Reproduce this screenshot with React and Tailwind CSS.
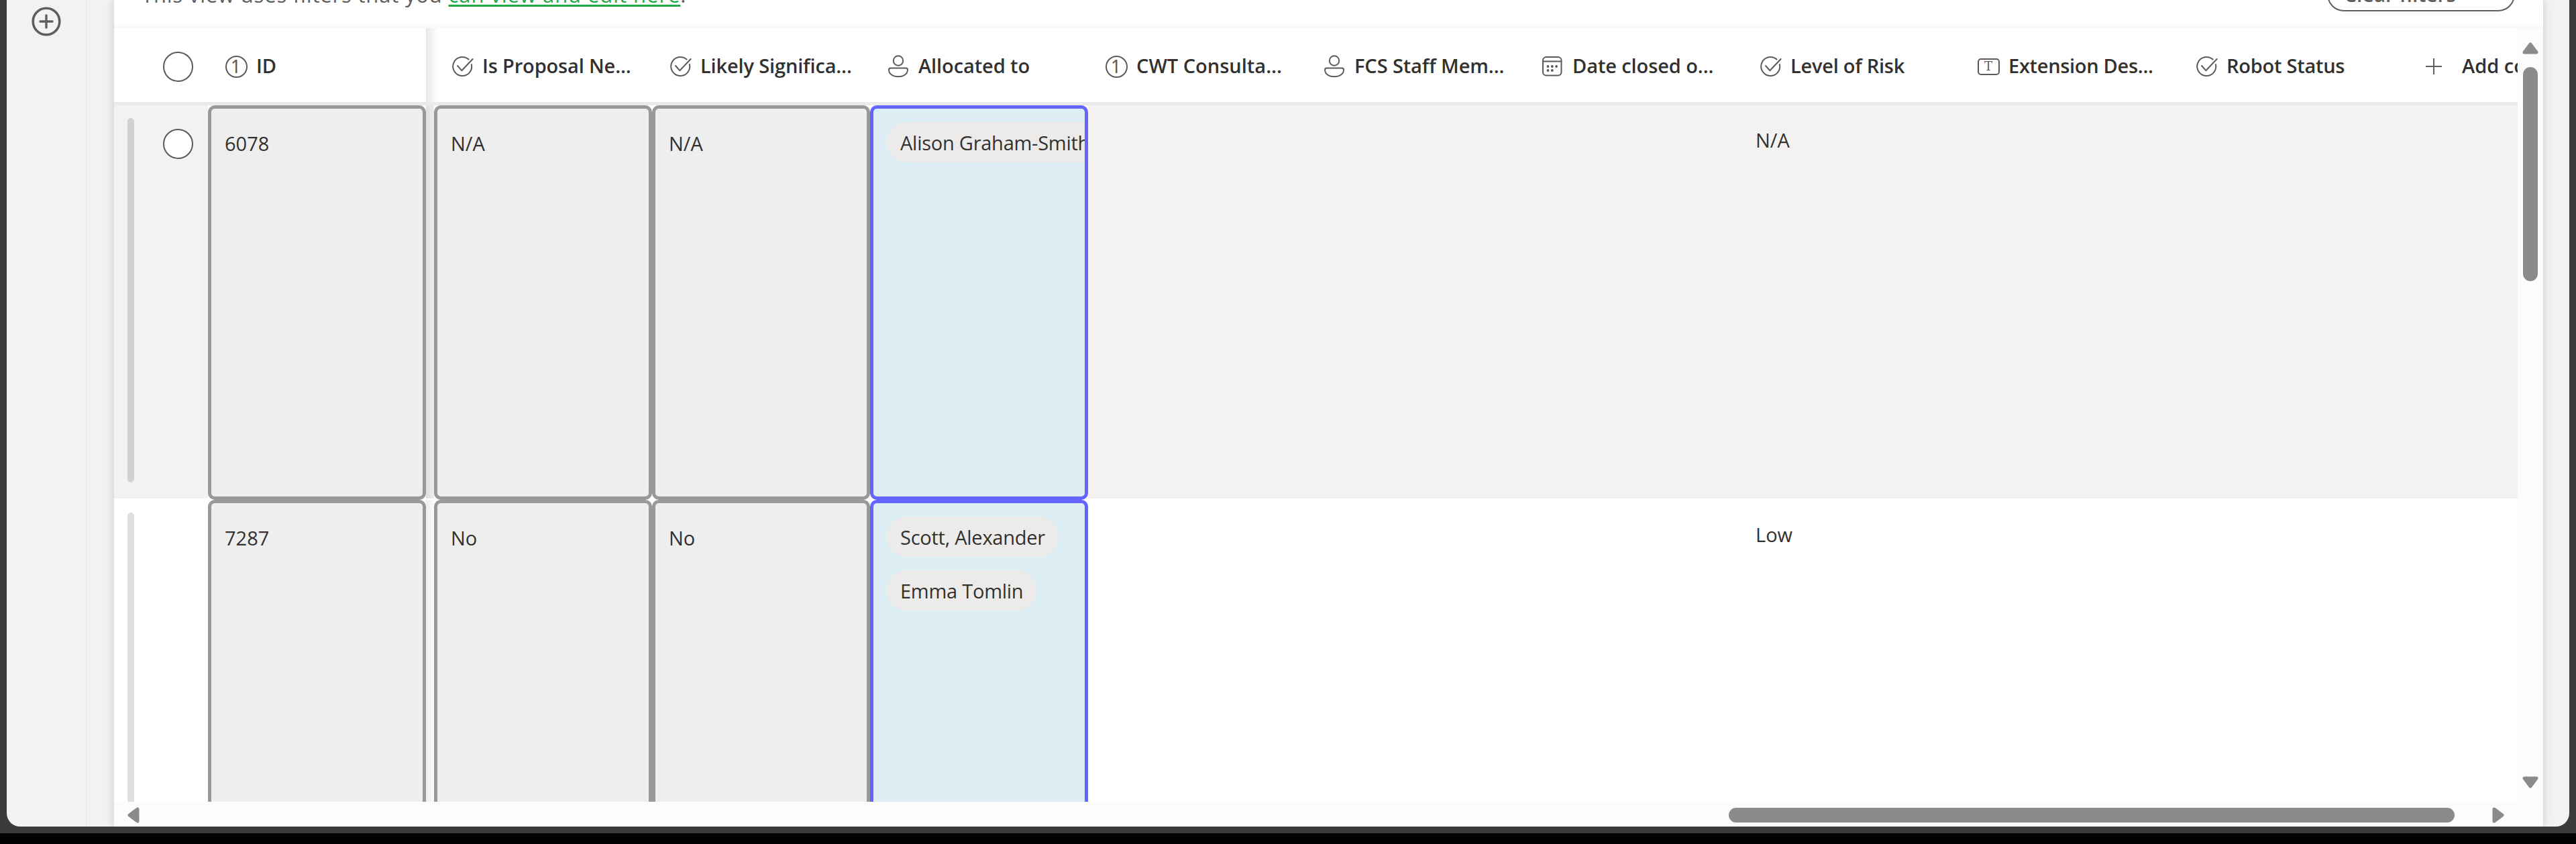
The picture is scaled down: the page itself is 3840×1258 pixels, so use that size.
const stroke = {
  fill: 'none',
  stroke: '#5b5a58',
  strokeWidth: 2,
  strokeLinecap: 'round',
  strokeLinejoin: 'round',
};

function ChoiceIcon() {
  return (
    <svg viewBox="0 0 36 36" className="size-9" {...stroke}>
      <path d="M27.6 7.6A14 14 0 1 0 31.9 15" />
      <path d="M11 17l6.3 7.2L33.6 7" />
    </svg>
  );
}

function NumberIcon() {
  return (
    <div className="flex size-9 items-center justify-center">
      <div className="flex size-[33px] items-center justify-center rounded-full border-2 border-[#5b5a58] font-['Noto_Sans'] text-[27px] leading-none text-[#5b5a58]">
        <span className="-mt-px -ml-px">1</span>
      </div>
    </div>
  );
}

function PersonIcon() {
  return (
    <svg viewBox="0 0 36 36" className="size-9" {...stroke}>
      <circle cx="18" cy="9.500" r="7.200" />
      <path d="M6.500 20.500h23a2.500 2.500 0 0 1 2.500 2.500c0 6.200-6 10.300-14 10.300S4 29.200 4 23a2.500 2.500 0 0 1 2.500-2.500z" />
    </svg>
  );
}

function DateIcon() {
  return (
    <svg viewBox="0 0 36 36" className="size-9" {...stroke}>
      <rect x="4" y="4" width="27.500" height="27.500" rx="5" />
      <path d="M4 10.500h27.500" />
      <g fill="#5b5a58" stroke="none">
        <circle cx="11.500" cy="18" r="1.900" />
        <circle cx="17.800" cy="18" r="1.900" />
        <circle cx="24.100" cy="18" r="1.900" />
        <circle cx="11.500" cy="24" r="1.900" />
        <circle cx="17.800" cy="24" r="1.900" />
      </g>
    </svg>
  );
}

function TextIcon() {
  return (
    <div className="flex size-9 items-center justify-center">
      <div className="flex h-[25px] w-[33px] items-center justify-center rounded-[5px] border-2 border-[#5b5a58] font-['DejaVu_Serif'] text-[18px] leading-none text-[#5b5a58]">
        T
      </div>
    </div>
  );
}

const columns = [
  { label: 'Is Proposal Ne...', Icon: ChoiceIcon, tracking: 'tracking-[-0.15px]' },
  { label: 'Likely Significa...', Icon: ChoiceIcon, tracking: 'tracking-[-0.15px]' },
  { label: 'Allocated to', Icon: PersonIcon, tracking: 'tracking-[-0.1px]' },
  { label: 'CWT Consulta...', Icon: NumberIcon, tracking: 'tracking-normal' },
  { label: 'FCS Staff Mem...', Icon: PersonIcon, tracking: 'tracking-[-0.1px]' },
  { label: 'Date closed o...', Icon: DateIcon, tracking: 'tracking-[-0.1px]' },
  { label: 'Level of Risk', Icon: ChoiceIcon, tracking: 'tracking-[-0.25px]' },
  { label: 'Extension Des...', Icon: TextIcon, tracking: 'tracking-[-0.3px]' },
  { label: 'Robot Status', Icon: ChoiceIcon, tracking: 'tracking-[-0.25px]' },
];

const rows = [
  { id: '6078', proposal: 'N/A', likely: 'N/A', people: ['Alison Graham-Smith'], risk: 'N/A', active: true },
  { id: '7287', proposal: 'No', likely: 'No', people: ['Scott, Alexander', 'Emma Tomlin'], risk: 'Low', active: false },
];

function ColumnHeader({ label, Icon, tracking }) {
  return (
    <div className="flex w-[325px] shrink-0 items-center pt-1 pl-6">
      <Icon />
      <span className={`-mt-[3px] ml-3 whitespace-nowrap font-semibold ${tracking}`}>{label}</span>
    </div>
  );
}

function Cell({ children }) {
  return (
    <div className="h-[588px] w-[325px] shrink-0 bg-white">
      <div className="h-full rounded-[10px] border-[5px] border-[#999] bg-[#eee] pt-8 pl-5">
        {children}
      </div>
    </div>
  );
}

function PeopleCell({ people }) {
  return (
    <div className="h-[588px] w-[325px] shrink-0 bg-white">
      <div className="flex h-full flex-col items-start gap-5 overflow-hidden rounded-[10px] border-[5px] border-[#6464ff] bg-[#dcedf4] pt-5 pl-5">
        {people.map((name) => (
          <span key={name} className="flex h-[60px] shrink-0 items-center rounded-full bg-[#edebe9] px-5 pt-px whitespace-nowrap tracking-[-0.25px]">
            {name}
          </span>
        ))}
      </div>
    </div>
  );
}

function Row({ row }) {
  return (
    <div className={`flex h-[588px] shrink-0 border-b-2 border-white ${row.active ? 'bg-[#f3f2f1]' : 'bg-white'}`}>
      <div className="flex w-[140px] shrink-0 items-start pt-[19px] pl-5">
        <div className={`h-[543px] w-2.5 rounded-full ${row.active ? 'bg-[#d2d1cf]' : 'bg-[#e1dfdd]'}`} />
        {row.active && <div className="mt-4 ml-[43px] size-[45px] rounded-full border-2 border-[#5b5a58] bg-white" />}
      </div>
      <Cell>{row.id}</Cell>
      <div className={`w-3 shrink-0 bg-linear-to-r ${row.active ? 'from-[#e1dfde] to-[#eeedec]' : 'from-[#ededed] to-[#fcfcfc]'}`} />
      <Cell>{row.proposal}</Cell>
      <Cell>{row.likely}</Cell>
      <PeopleCell people={row.people} />
      <div className="ml-[975px] pt-8 pl-5">{row.risk}</div>
    </div>
  );
}

function Arrow({ className }) {
  return (
    <svg viewBox="0 0 24 18" className={`h-[18px] w-6 shrink-0 ${className}`}>
      <path d="M12 3L21 15H3z" fill="#8b8b8b" stroke="#8b8b8b" strokeWidth="5" strokeLinejoin="round" />
    </svg>
  );
}

export default function App() {
  return (
    <div className="h-[1258px] w-[3840px] overflow-hidden bg-black font-['Open_Sans',sans-serif] text-[29px] leading-10 text-[#323130]">
      <div className="h-[1242px] bg-[#3b3b3b] px-2.5">
        <div className="flex h-[1232px] overflow-hidden rounded-b-[20px] bg-[#f3f2f1]">
          <nav className="flex w-[119px] shrink-0 justify-center border-r border-[#e8e7e6] pt-2.5">
            <svg viewBox="0 0 44 44" className="-ml-px size-11" fill="none" stroke="#5f5e5c" strokeLinecap="round">
              <circle cx="22" cy="22" r="19.800" strokeWidth="3.600" />
              <path d="M22 13v18M13 22h18" strokeWidth="3.400" />
            </svg>
          </nav>

          <main className="ml-[41px] flex w-[3621px] shrink-0 flex-col bg-white shadow-[0_0_12px_rgba(0,0,0,0.18)]">
            <div className="flex h-[42px] shrink-0 justify-between bg-linear-to-b from-white from-85% to-[#f7f7f7] pr-[42px] pl-[41px]">
              <p className="-mt-7 text-[31px] tracking-[0.82px] whitespace-pre text-[#605e5c]">
                This view uses filters that you{' '}
                <span className="tracking-[0.95px] text-[#22a745] underline decoration-[3px] underline-offset-[3px]">can view and edit here</span>.
              </p>
              <div className="-mt-[33px] flex h-[50px] w-[280px] items-center rounded-full border-2 border-[#605e5c] pl-[23px] text-[30px] font-semibold text-[#605e5c]">
                Clear filters
              </div>
            </div>

            <div className="flex h-[1153px] shrink-0">
              <div className="flex w-[3583px] shrink-0 flex-col overflow-hidden">
                <div className="flex h-[115px] shrink-0 border-b-[5px] border-[#eaeae9]">
                  <div className="flex w-[140px] shrink-0 items-center pt-[5px] pl-[73px]">
                    <div className="size-[45px] rounded-full border-2 border-[#5b5a58]" />
                  </div>
                  <ColumnHeader label="ID" Icon={NumberIcon} tracking="tracking-normal" />
                  <div className="w-3 shrink-0">
                    <div className="h-full w-[18px] bg-linear-to-r from-[#e8e8e8] to-white" />
                  </div>
                  {columns.map((column) => (
                    <ColumnHeader key={column.label} {...column} />
                  ))}
                  <div className="flex shrink-0 items-center pt-1 pl-[44px]">
                    <svg viewBox="0 0 24 24" className="size-6" fill="none" stroke="#605e5c" strokeWidth="2">
                      <path d="M12 0v24M0 12h24" />
                    </svg>
                    <span className="-mt-[3px] ml-[30px] font-semibold whitespace-nowrap">Add column</span>
                  </div>
                </div>
                {rows.map((row) => (
                  <Row key={row.id} row={row} />
                ))}
              </div>

              <div className="flex w-[38px] shrink-0 flex-col items-center bg-[#fcfcfc] pt-[21px]">
                <Arrow className="" />
                <div className="mt-[19px] h-[319px] w-[22px] rounded-full bg-[#8b8b8b]" />
                <Arrow className="mt-auto mb-5 rotate-180" />
              </div>
            </div>

            <div className="flex h-[37px] shrink-0 items-center bg-[#fcfcfc] pt-0.5 pl-[17px]">
              <Arrow className="-rotate-90" />
              <div className="ml-[2366px] h-[22px] w-[1082px] rounded-full bg-[#8b8b8b]" />
              <Arrow className="ml-[53px] rotate-90" />
            </div>
          </main>
        </div>
      </div>
    </div>
  );
}
